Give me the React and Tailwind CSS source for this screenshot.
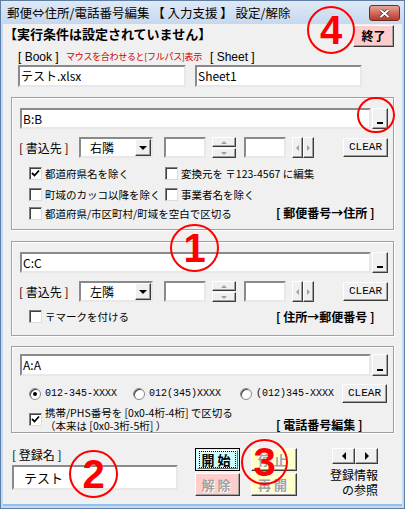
import React from 'react';

const JP = { fontFamily: '"Noto Sans CJK JP", "Noto Sans", sans-serif' };

const btn3d =
  'bg-[#f0f0f0] border border-t-white border-l-white border-r-[#3c3c3c] border-b-[#3c3c3c] shadow-[inset_-1px_-1px_0_#a0a0a0]';
const sunken =
  'bg-white border-2 border-t-[#8a8a8a] border-l-[#8a8a8a] border-r-[#e8e8e8] border-b-[#e8e8e8]';
const group =
  'border border-[#a0a0a0] shadow-[inset_1px_1px_0_#ffffff,1px_1px_0_#ffffff]';

const Check = ({ checked }) => (
  <span className="w-[13px] h-[13px] shrink-0 bg-white border border-t-[#808080] border-l-[#808080] border-r-[#dcdcdc] border-b-[#dcdcdc] shadow-[inset_1px_1px_0_#404040] flex items-center justify-center">
    {checked && (
      <svg width="9" height="9" viewBox="0 0 9 9">
        <path d="M1 4 L3.5 6.5 L8 1.5" fill="none" stroke="#000" strokeWidth="1.8" />
      </svg>
    )}
  </span>
);

const Radio = ({ on }) => (
  <span className="w-[12px] h-[12px] shrink-0 rounded-full bg-white border border-[#8a8a8a] shadow-[inset_1px_1px_0_#404040] flex items-center justify-center">
    {on && <span className="w-[4px] h-[4px] rounded-full bg-black" />}
  </span>
);

const Circle = ({ n, className }) => (
  <div
    className={`absolute rounded-full border-2 border-[#ff0000] flex items-center justify-center text-[#ff0000] font-bold text-[40px] leading-none ${className}`}
    style={{ fontFamily: '"Liberation Sans", Arial, sans-serif' }}
  >
    {n}
  </div>
);

const Tri = ({ dir, color = '#000', s = 4 }) => {
  const pts = {
    down: `0,0 ${s * 2},0 ${s},${s}`,
    up: `0,${s} ${s * 2},${s} ${s},0`,
    left: `${s},0 ${s},${s * 2} 0,${s}`,
    right: `0,0 0,${s * 2} ${s},${s}`,
  }[dir];
  const w = dir === 'up' || dir === 'down' ? s * 2 : s;
  const h = dir === 'up' || dir === 'down' ? s : s * 2;
  return (
    <svg width={w} height={h} viewBox={`0 0 ${w} ${h}`}>
      <polygon points={pts} fill={color} />
    </svg>
  );
};

const ClearBtn = ({ className = '' }) => (
  <button
    className={`${btn3d} w-[45px] h-[19px] flex items-center justify-center text-[11px] ${className}`}
    style={{ fontFamily: '"Liberation Mono", monospace' }}
  >
    CLEAR
  </button>
);

const RangeRow = ({ value }) => (
  <div className="flex mt-[10px] ml-[8px]">
    <div className={`${sunken} w-[351px] h-[21px] flex items-center pl-[1px] text-[12px]`}>{value}</div>
    <button className={`${btn3d} w-[16px] h-[21px] ml-[1px] flex items-end justify-center pb-[4px]`}>
      <span className="w-[6px] h-[2px] bg-black" />
    </button>
  </div>
);

const WriteRow = ({ side }) => (
  <div className="flex items-start h-[21px] mt-[8px]">
    <span className="ml-[7px] w-[60px] text-[12px] leading-[21px]">[ 書込先 ]</span>
    <div className={`${sunken} w-[74px] h-[21px] flex items-center`}>
      <span className="flex-1 pl-[9px] text-[12px]">{side}</span>
      <span className={`${btn3d} w-[16px] h-[17px] flex items-center justify-center`}>
        <Tri dir="down" />
      </span>
    </div>
    <div className={`${sunken} ml-[11px] w-[42px] h-[21px]`} />
    <div className="ml-[6px] w-[24px] h-[21px] flex flex-col gap-px">
      <span className={`${btn3d} h-[10px] flex items-center justify-center`}>
        <Tri dir="up" color="#a0a0a0" s={3} />
      </span>
      <span className={`${btn3d} h-[10px] flex items-center justify-center`}>
        <Tri dir="down" color="#a0a0a0" s={3} />
      </span>
    </div>
    <div className={`${sunken} ml-[8px] w-[42px] h-[21px]`} />
    <div className="ml-[6px] w-[22px] h-[21px] flex">
      <span className={`${btn3d} w-[11px] flex items-center justify-center`}>
        <Tri dir="left" color="#a0a0a0" s={3} />
      </span>
      <span className={`${btn3d} w-[11px] flex items-center justify-center`}>
        <Tri dir="right" color="#a0a0a0" s={3} />
      </span>
    </div>
    <ClearBtn className="ml-[29px] mt-[1px]" />
  </div>
);

const CheckItem = ({ checked, children, className = '' }) => (
  <div className={`flex items-center gap-[3px] text-[10.5px] ${className}`}>
    <Check checked={checked} />
    <span className="whitespace-nowrap">{children}</span>
  </div>
);

const Tag = ({ children, className = '' }) => (
  <span className={`block font-bold text-[12px] leading-[14px] whitespace-nowrap ${className}`}>{children}</span>
);

const pale =
  'border border-t-white border-l-white border-r-[#3c3c3c] border-b-[#3c3c3c] shadow-[inset_-1px_-1px_0_#a0a0a0] font-bold text-[13px] tracking-[3px] text-[#a0a0a0] [text-shadow:1px_1px_0_#ffffff]';

export default function App() {
  return (
    <div
      className="relative w-[405px] h-[509px] bg-[#c7d9f0] border border-[#5f7ea6] flex flex-col text-black"
      style={JP}
    >
      {/* title bar */}
      <div className="h-[23px] flex items-start bg-gradient-to-b from-[#dfe9f6] to-[#c6d8ef]">
        <span className="ml-[6px] mt-[4px] text-[12.5px] leading-[15px] whitespace-nowrap">
          郵便⇔住所/電話番号編集 【 入力支援 】 設定/解除
        </span>
        <button className="ml-auto mr-[4px] mt-[4px] w-[31px] h-[16px] rounded-[3px] border border-[#6e2c25] bg-gradient-to-b from-[#e6a69c] via-[#cf6a5d] to-[#b8392c] flex items-center justify-center">
          <svg width="11" height="9" viewBox="0 0 11 9">
            <path d="M1.5 1 L9.5 8 M9.5 1 L1.5 8" stroke="#4a1a14" strokeWidth="3.2" />
            <path d="M1.5 1 L9.5 8 M9.5 1 L1.5 8" stroke="#fff" strokeWidth="2" />
          </svg>
        </button>
      </div>

      {/* body */}
      <div className="flex-1 mx-[2px] mb-[2px] bg-[#f0f0f0] border-b-2 border-[#8fc2ea] flex flex-col">
        <div className="flex items-start h-[23px]">
          <span className="ml-px mt-[1px] font-bold text-[13px] leading-[17px] whitespace-nowrap">
            【実行条件は設定されていません】
          </span>
          <button className="ml-auto mr-[8px] mt-[1px] w-[41px] h-[22px] bg-[#ffcccc] border border-t-white border-l-white border-r-[#3c3c3c] border-b-[#3c3c3c] shadow-[inset_-1px_-1px_0_#a0a0a0] font-bold text-[12px]">
            終了
          </button>
        </div>

        <div className="flex items-center h-[14px] mt-[3px] ml-[15px] whitespace-nowrap">
          <span className="w-[48px] text-[12px]" style={{ fontFamily: '"Liberation Sans", sans-serif' }}>
            [ Book ]
          </span>
          <span className="w-[144px] text-[9px] tracking-[-0.3px] text-[#cc0000]">
            マウスを合わせると[フルパス]表示
          </span>
          <span className="text-[12px]" style={{ fontFamily: '"Liberation Sans", sans-serif' }}>
            [ Sheet ]
          </span>
        </div>

        <div className="flex mt-[1px] ml-[15px]">
          <div className={`${sunken} w-[168px] h-[22px] flex items-center pl-[1px] text-[12px]`}>テスト.xlsx</div>
          <div className={`${sunken} ml-[9px] w-[167px] h-[22px] flex items-center pl-[1px] text-[12px]`}>Sheet1</div>
        </div>

        {/* group 1 */}
        <div className={`${group} mt-[10px] ml-[8px] w-[383px] h-[133px] flex flex-col`}>
          <RangeRow value="B:B" />
          <WriteRow side="右隣" />
          <div className="flex mt-[8px] ml-[17px]">
            <CheckItem checked className="w-[136px]">都道府県名を除く</CheckItem>
            <CheckItem>変換元を 〒123-4567 に編集</CheckItem>
          </div>
          <div className="flex mt-[5px] ml-[17px]">
            <CheckItem className="w-[136px]">町域のカッコ以降を除く</CheckItem>
            <CheckItem>事業者名を除く</CheckItem>
          </div>
          <div className="flex items-center mt-[3px] ml-[17px]">
            <CheckItem className="w-[247px]">都道府県/市区町村/町域を空白で区切る</CheckItem>
            <Tag>[ 郵便番号→住所 ]</Tag>
          </div>
        </div>

        {/* group 2 */}
        <div className={`${group} mt-[11px] ml-[8px] w-[383px] h-[95px] flex flex-col`}>
          <RangeRow value="C:C" />
          <WriteRow side="左隣" />
          <div className="flex items-center mt-[7px] ml-[17px]">
            <CheckItem className="w-[247px]">〒マークを付ける</CheckItem>
            <Tag>[ 住所→郵便番号 ]</Tag>
          </div>
        </div>

        {/* group 3 */}
        <div className={`${group} mt-[10px] ml-[8px] w-[383px] h-[87px] flex flex-col`}>
          <div className="flex mt-[7px] ml-[8px]">
            <div className={`${sunken} w-[351px] h-[22px] flex items-center pl-[1px] text-[12px]`}>A:A</div>
            <button className={`${btn3d} w-[16px] h-[22px] ml-[1px] flex items-end justify-center pb-[4px]`}>
              <span className="w-[6px] h-[2px] bg-black" />
            </button>
          </div>
          <div
            className="flex items-center h-[19px] mt-[8px] ml-[17px] text-[10px]"
            style={{ fontFamily: '"Liberation Mono", monospace' }}
          >
            <div className="flex items-center gap-[4px] w-[104px]">
              <Radio on />
              <span>012-345-XXXX</span>
            </div>
            <div className="flex items-center gap-[4px] w-[107px]">
              <Radio />
              <span>012(345)XXXX</span>
            </div>
            <div className="flex items-center gap-[4px]">
              <Radio />
              <span>(012)345-XXXX</span>
            </div>
            <ClearBtn className="ml-auto mr-[6px]" />
          </div>
          <div className="flex items-start mt-[3px] ml-[17px]">
            <div className="w-[247px] flex items-center gap-[3px]">
              <Check checked />
              <span className="text-[10.5px] leading-[13px] whitespace-nowrap">
                携帯/PHS番号を [0x0-4桁-4桁] で区切る
                <br />
                （本来は [0x0-3桁-5桁] ）
              </span>
            </div>
            <Tag className="mt-[12px]">[ 電話番号編集 ]</Tag>
          </div>
        </div>

        {/* bottom */}
        <div className="flex mt-[15px] ml-[9px]">
          <div className="flex flex-col w-[166px]">
            <span className="text-[12px] leading-[14px]">[ 登録名 ]</span>
            <div className={`${sunken} mt-[3px] h-[25px] flex items-center pl-[10px] text-[13px]`}>テスト</div>
          </div>
          <div className="ml-[17px] grid grid-cols-[45px_46px] grid-rows-[23px_23px] gap-x-[11px] gap-y-[2px]">
            <button className="bg-[#ccffff] border border-black p-px">
              <span className="h-full flex items-center justify-center border border-t-white border-l-white border-r-[#6a6a6a] border-b-[#6a6a6a]">
                <span className="px-px outline outline-1 outline-dotted outline-black font-bold text-[13px] leading-[15px] tracking-[3px]">
                  開始
                </span>
              </span>
            </button>
            <button className={`bg-[#ffffcc] ${pale}`}>停止</button>
            <button className={`bg-[#ffcccc] ${pale}`}>解除</button>
            <button className={`bg-[#ffffcc] ${pale}`}>再開</button>
          </div>
          <div className="ml-[35px] flex flex-col items-end w-[46px]">
            <div className="flex w-[46px] h-[16px]">
              <span className={`${btn3d} flex-1 flex items-center justify-center`}>
                <Tri dir="left" s={4} />
              </span>
              <span className={`${btn3d} flex-1 flex items-center justify-center`}>
                <Tri dir="right" s={4} />
              </span>
            </div>
            <span className="mt-[3px] text-[12px] leading-[15px] text-right whitespace-nowrap">
              登録情報
              <br />
              の参照
            </span>
          </div>
        </div>
      </div>

      {/* annotation circles */}
      <Circle n="4" className="left-[306px] top-[5px] w-[48px] h-[48px]" />
      <div className="absolute left-[356px] top-[96px] w-[38px] h-[36px] rounded-full border-2 border-[#ff0000]" />
      <Circle n="1" className="left-[169px] top-[223px] w-[49px] h-[48px]" />
      <Circle n="2" className="left-[68px] top-[449px] w-[49px] h-[48px]" />
      <Circle n="3" className="left-[240px] top-[438px] w-[47px] h-[46px]" />
    </div>
  );
}
